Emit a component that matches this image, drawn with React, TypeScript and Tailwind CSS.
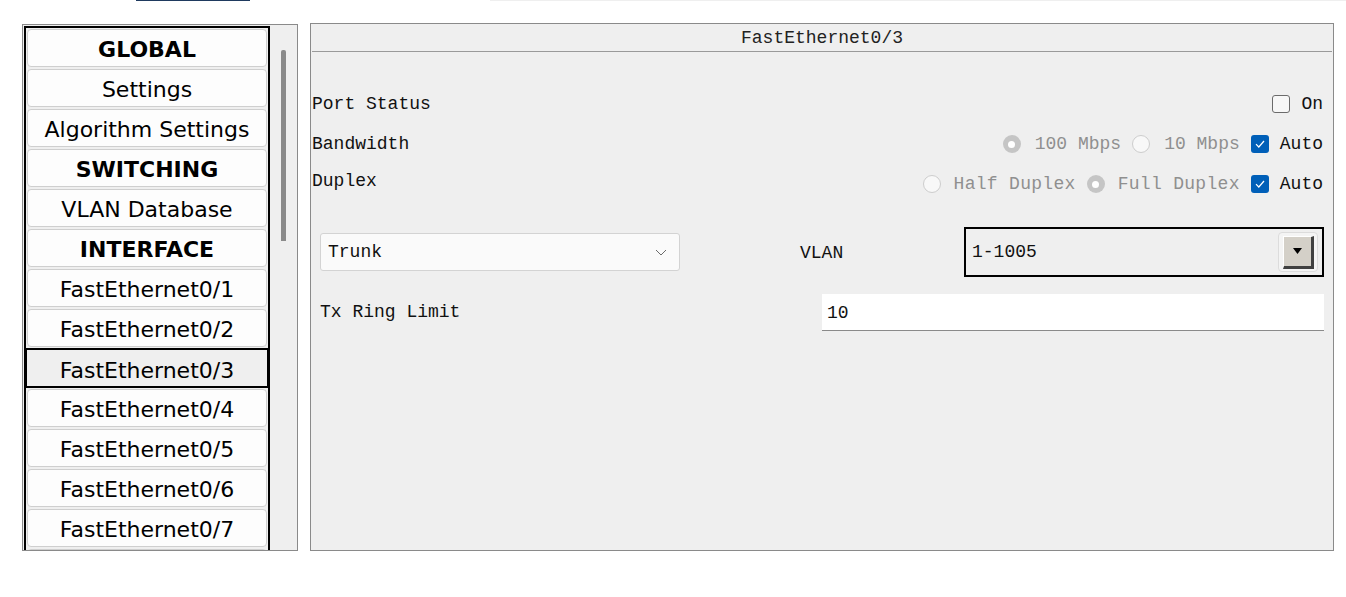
const sans = { fontFamily: '"DejaVu Sans", Verdana, sans-serif' };
const mono = { fontFamily: '"Liberation Mono", "DejaVu Sans Mono", monospace' };

interface NavItem {
  readonly label: string;
  readonly heading?: boolean;
  readonly selected?: boolean;
}

const navItems: readonly NavItem[] = [
  { label: "GLOBAL", heading: true },
  { label: "Settings" },
  { label: "Algorithm Settings" },
  { label: "SWITCHING", heading: true },
  { label: "VLAN Database" },
  { label: "INTERFACE", heading: true },
  { label: "FastEthernet0/1" },
  { label: "FastEthernet0/2" },
  { label: "FastEthernet0/3", selected: true },
  { label: "FastEthernet0/4" },
  { label: "FastEthernet0/5" },
  { label: "FastEthernet0/6" },
  { label: "FastEthernet0/7" },
  { label: "" },
];

function NavButton({ label, heading, selected }: NavItem) {
  if (selected) {
    return (
      <div className="-mx-[2px] -my-px h-[40px] shrink-0 border-2 border-black bg-[#efefef] flex items-center justify-center pt-[5px] text-[22px] text-black">
        {label}
      </div>
    );
  }
  return (
    <div
      className={`h-[38px] shrink-0 rounded-[4px] border border-[#cfcfcf] bg-[#fdfdfd] flex items-center justify-center pt-[3px] text-[22px] text-black ${
        heading ? "font-bold" : ""
      }`}
    >
      {label}
    </div>
  );
}

function Checkbox({ checked }: { readonly checked?: boolean }) {
  if (checked) {
    return (
      <span className="w-[18px] h-[18px] rounded-[3px] bg-[#005fb8] flex items-center justify-center shrink-0">
        <svg width="10" height="8" viewBox="0 0 10 8" fill="none">
          <path d="M1 4.2 L3.8 7 L9 1" stroke="white" strokeWidth="1.2" />
        </svg>
      </span>
    );
  }
  return (
    <span className="block w-[18px] h-[18px] rounded-[3px] border border-[#6b6b6b] bg-[#f7f7f7] shrink-0" />
  );
}

function Radio({ checked }: { readonly checked?: boolean }) {
  if (checked) {
    return (
      <span className="w-[18px] h-[18px] rounded-full bg-[#c5c5c5] flex items-center justify-center shrink-0">
        <span className="block w-[7px] h-[7px] rounded-full bg-white" />
      </span>
    );
  }
  return (
    <span className="block w-[18px] h-[18px] rounded-full border border-[#cdcdcd] bg-[#f8f8f8] shrink-0" />
  );
}

export default function App() {
  return (
    <div className="w-full h-[597px] bg-white overflow-hidden">
      <div className="flex h-[2px]">
        <div className="ml-[136px] w-[114px] h-px bg-[#1f3a5f]" />
        <div className="ml-[240px] flex-1 h-px bg-[#efefef]" />
      </div>

      <div className="flex items-start pl-[22px] pt-[21px] gap-[12px]">
        {/* left nav */}
        <div className="mt-px w-[276px] h-[527px] border border-[#8a8a8a] bg-[#efefef] flex p-px overflow-hidden" style={sans}>
          <div className="w-[246px] h-[540px] border-2 border-black flex flex-col gap-[2px] px-px pt-px overflow-hidden">
            {navItems.map((item, i) => (
              <NavButton key={i} {...item} />
            ))}
          </div>
          <div className="flex-1">
            <div className="ml-[11px] mt-[24px] w-[5px] h-[191px] rounded-t-[2px] bg-[#8a8a8a]" />
          </div>
        </div>

        {/* right detail */}
        <div className="w-[1024px] h-[528px] border border-[#8a8a8a] bg-[#efefef] text-[18px] text-[#111]" style={mono}>
          <div className="mx-px h-[28px] border-b border-[#9a9a9a] flex items-center justify-center pt-[2px] text-[#222]">
            FastEthernet0/3
          </div>

          <div className="mt-[32px] pl-px pr-[10px]">
            <div className="h-[40px] flex items-center justify-between">
              <span>Port Status</span>
              <div className="flex items-center gap-[11px]">
                <Checkbox />
                <span>On</span>
              </div>
            </div>
            <div className="h-[40px] flex items-center justify-between">
              <span>Bandwidth</span>
              <div className="flex items-center">
                <Radio checked />
                <span className="ml-[14px] text-[#8f8f8f]">100 Mbps</span>
                <span className="ml-[11px]"><Radio /></span>
                <span className="ml-[14px] text-[#8f8f8f]">10 Mbps</span>
                <span className="ml-[11px]"><Checkbox checked /></span>
                <span className="ml-[11px]">Auto</span>
              </div>
            </div>
            <div className="h-[40px] flex items-center justify-between">
              <span className="pb-[6px]">Duplex</span>
              <div className="flex items-center">
                <Radio />
                <span className="ml-[13px] text-[#8f8f8f] tracking-[0.3px]">Half Duplex</span>
                <span className="ml-[11px]"><Radio checked /></span>
                <span className="ml-[13px] text-[#8f8f8f] tracking-[0.3px]">Full Duplex</span>
                <span className="ml-[11px]"><Checkbox checked /></span>
                <span className="ml-[11px]">Auto</span>
              </div>
            </div>
          </div>

          <div className="mt-[23px] flex items-center pl-[9px] pr-[9px] h-[50px]">
            <div className="w-[360px] h-[38px] rounded-[3px] border border-[#d3d3d3] bg-[#fafafa] flex items-center justify-between pl-[7px] pr-[12px]">
              <span>Trunk</span>
              <svg width="12" height="7" viewBox="0 0 12 7" fill="none">
                <path d="M1 1 L6 6 L11 1" stroke="#6a6a6a" strokeWidth="1" />
              </svg>
            </div>
            <span className="ml-[120px] w-[164px] pt-[2px]">VLAN</span>
            <div className="flex-1 h-[50px] border-2 border-black flex items-center justify-between pl-[6px] pr-[4px]">
              <span>1-1005</span>
              <div className="w-[40px] h-[40px] rounded-[4px] border border-[#dcdcdc] bg-[#f4f4f4] flex items-center justify-center">
                <div className="w-[31px] h-[33px] bg-[#d4d0c8] border-t border-l border-t-[#ffffff] border-l-[#ffffff] border-r-[3px] border-b-[3px] border-r-[#404040] border-b-[#404040] flex items-center justify-center">
                  <svg width="9" height="6" viewBox="0 0 9 6">
                    <path d="M0 0 H9 L4.5 6 Z" fill="#000" />
                  </svg>
                </div>
              </div>
            </div>
          </div>

          <div className="mt-[17px] flex items-center pl-[9px] pr-[9px] h-[37px]">
            <span className="w-[502px]">Tx Ring Limit</span>
            <div className="flex-1 h-[37px] bg-white border-b border-[#8a8a8a] flex items-center pl-[5px] pt-[2px]">
              10
            </div>
          </div>
        </div>
      </div>
    </div>
  );
}
